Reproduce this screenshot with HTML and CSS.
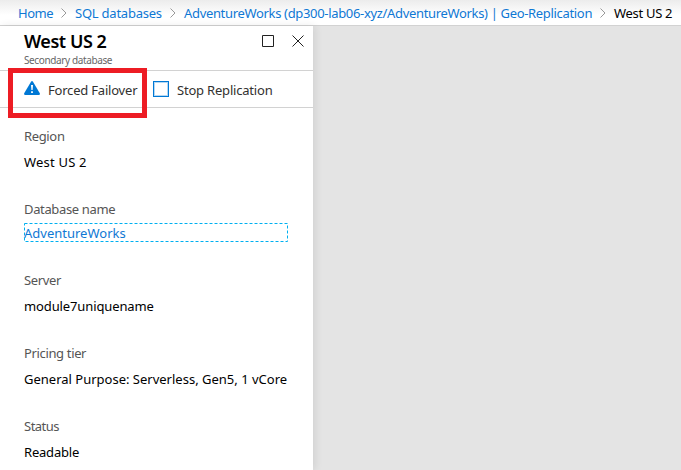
FILE: index.html
```html
<!DOCTYPE html>
<html lang="en">
<head>
<meta charset="utf-8">
<title>West US 2</title>
<link rel="stylesheet" href="styles.css">
</head>
<body>
<nav class="crumbs">
  <a class="c-home">Home</a>
  <svg class="chev" viewBox="0 0 6 10"><path d="M.5 .5 5 5 .5 9.500"/></svg>
  <a class="c-sql">SQL databases</a>
  <svg class="chev" viewBox="0 0 6 10"><path d="M.5 .5 5 5 .5 9.500"/></svg>
  <a class="c-geo">AdventureWorks (dp300-lab06-xyz/AdventureWorks) | Geo-Replication</a>
  <svg class="chev" viewBox="0 0 6 10"><path d="M.5 .5 5 5 .5 9.500"/></svg>
  <span class="c-here">West US 2</span>
</nav>
<main class="blade">
  <header class="head">
    <div class="titles">
      <h1>West US 2</h1>
      <p>Secondary database</p>
    </div>
    <svg class="max" viewBox="0 0 12 12"><path d="M.5 .5h11v11H.5z"/></svg>
    <svg class="close" viewBox="0 0 12 12"><path d="M.5 .5l11 11M11.500 .5l-11 11"/></svg>
  </header>
  <div class="toolbar">
    <svg class="warn" viewBox="0 0 16 14"><path fill="#0078d4" d="M7 .7Q8-.7 9 .7L15.800 12.300Q16.300 14 14.800 14H1.200Q-.3 14 .2 12.300Z"/><path fill="#fff" d="M7 4h2l-.4 5H7.400zM7.100 10.200h1.800v1.700H7.100z"/></svg>
    <span class="t-fail">Forced Failover</span>
    <i class="box"></i>
    <span class="t-stop">Stop Replication</span>
    <div class="mark"></div>
  </div>
  <dl class="props">
    <div><dt class="k-region">Region</dt><dd class="v-region">West US 2</dd></div>
    <div class="db"><dt class="k-db">Database name</dt><dd class="link"><span>AdventureWorks</span><svg viewBox="0 0 264 19"><rect x=".5" y=".5" width="263" height="18"/></svg></dd></div>
    <div><dt class="k-server">Server</dt><dd class="v-server">module7uniquename</dd></div>
    <div><dt class="k-tier">Pricing tier</dt><dd class="v-tier">General Purpose: Serverless, Gen5, 1 vCore</dd></div>
    <div><dt class="k-status">Status</dt><dd class="v-status">Readable</dd></div>
  </dl>
</main>
</body>
</html>
```
FILE: styles.css
```css
* { box-sizing: border-box; }
body {
  margin: 0;
  height: 470px;
  overflow: hidden;
  background: #e4e4e4;
  font: 13px/18px "Noto Sans", "Open Sans", sans-serif;
  color: #000;
}
svg { display: block; flex: none; fill: none; }
.crumbs {
  display: flex;
  align-items: center;
  height: 26px;
  padding-left: 18px;
  border-bottom: 1px solid #d2d2d2;
  background: linear-gradient(#ececec, #fff 15px);
  white-space: nowrap;
}
.crumbs a { flex: none; color: #0f78d4; }
.chev { width: 6px; height: 10px; margin: 0 8px; stroke: #999; }
.c-home { width: 35px; letter-spacing: -.5px; }
.c-sql { width: 87px; letter-spacing: -.23px; }
.c-geo { width: 408px; letter-spacing: -.33px; }
.c-here { letter-spacing: -.3px; }
.blade {
  width: 313px;
  height: 444px;
  background: #fff;
  box-shadow: 2px 0 8px rgba(0, 0, 0, .09);
}
.head {
  display: flex;
  height: 45px;
  padding-left: 24px;
  border-bottom: 1px solid #d2d2d2;
}
.titles { width: 238px; white-space: nowrap; }
h1 { margin: 3px 0 0; font-size: 18px; line-height: 25px; font-weight: 600; letter-spacing: -.45px; }
.titles p { margin: 0; font-size: 10px; line-height: 12px; letter-spacing: -.38px; color: #666; }
.max { width: 12px; height: 12px; margin-top: 9px; stroke: #222; }
.close { width: 12px; height: 12px; margin: 9px 0 0 18px; stroke: #222; }
.toolbar {
  position: relative;
  display: flex;
  align-items: center;
  height: 37px;
  padding-left: 24px;
  border-bottom: 1px solid #d2d2d2;
  color: #323130;
  white-space: nowrap;
}
.toolbar span { padding-top: 2px; letter-spacing: -.2px; }
.warn { width: 16px; height: 14px; margin: -2px 8px 0 0; }
.t-fail { width: 105px; }
.box {
  width: 16px;
  height: 16px;
  margin-right: 8px;
  border: 1px solid #0078d4;
  box-shadow: inset 0 0 0 1px #b5d8f3;
}
.mark {
  position: absolute;
  left: 8px;
  top: -3px;
  width: 139px;
  height: 50px;
  border: 5px solid #ed1c24;
}
.props { margin: 0; padding: 19px 0 0 24px; white-space: nowrap; }
.props > div { height: 73px; }
.props > .db { height: 71px; }
dt { color: #555; letter-spacing: -.35px; }
dd { margin: 8px 0 0; }
.v-region { letter-spacing: .2px; }
.v-server { letter-spacing: -.12px; }
.v-status { letter-spacing: -.2px; }
.k-status { letter-spacing: -.5px; }
.link { position: relative; width: 264px; height: 19px; margin-top: 5px; line-height: 20px; color: #0f78d4; }
.link svg { position: absolute; inset: 0; width: 264px; height: 19px; }
.link rect { stroke: #00b0f0; stroke-dasharray: 3 2; }
```
